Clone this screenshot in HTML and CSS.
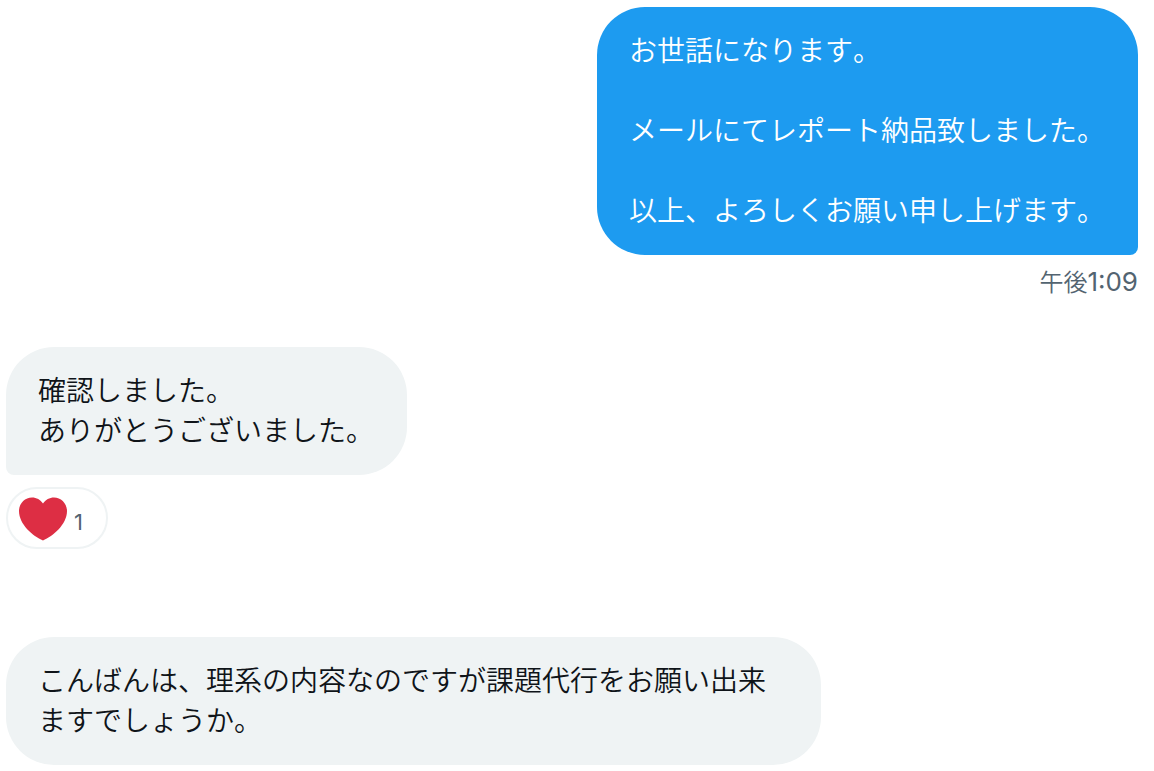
FILE: index.html
```html
<!DOCTYPE html>
<html lang="ja">
<head>
<meta charset="utf-8">
<meta name="viewport" content="width=device-width, initial-scale=1">
<title>メッセージ</title>
<link rel="stylesheet" href="styles.css">
</head>
<body>
<main class="chat">
  <article class="message sent">
    <p class="bubble">お世話になります。<br><br>メールにてレポート納品致しました。<br><br>以上、よろしくお願い申し上げます。</p>
    <time class="time" datetime="13:09">午後<span class="clock">1:09</span></time>
  </article>
  <article class="message received">
    <p class="bubble tail">確認しました。<br>ありがとうございました。</p>
    <button class="reaction" type="button">
      <svg class="heart" viewBox="0 0 48 43" aria-hidden="true"><path d="M24 43C14 38.500 0 27 0 13.500C0 6 6 0 13 0C17.500 0 21.500 2.300 24 6C26.500 2.300 30.500 0 35 0C42 0 48 6 48 13.500C48 27 34 38.500 24 43Z"/></svg>
      <span class="count">1</span>
    </button>
  </article>
  <article class="message received">
    <p class="bubble">こんばんは、理系の内容なのですが課題代行をお願い出来ますでしょうか。</p>
  </article>
</main>
</body>
</html>
```
FILE: styles.css
```css
* { box-sizing: border-box; }
body {
  margin: 0;
  background: #fff;
  color: #0f1419;
  font-family: Inter, "Noto Sans CJK JP", sans-serif;
  font-size: 28px;
  font-weight: 350;
  font-kerning: none;
  line-height: 40px;
}
.chat {
  display: flex;
  flex-direction: column;
  padding: 7px 16px 6px 6px;
}
.message {
  display: flex;
  flex-direction: column;
  align-items: flex-start;
}
.sent { align-items: flex-end; margin-bottom: 48px; }
.received + .received { margin-top: 88px; }
.bubble {
  margin: 0;
  max-width: 815px;
  padding: 24px 33px 24px 32px;
  border-radius: 48px;
  background: #eff3f4;
}
.tail { border-bottom-left-radius: 8px; }
.sent .bubble {
  background: #1d9bf0;
  color: #fff;
  border-bottom-right-radius: 8px;
}
.time {
  margin-top: 12px;
  color: #536471;
  font-size: 24px;
  line-height: 32px;
}
.clock { font-size: 26px; font-weight: 400; line-height: 26px; }
.reaction {
  display: flex;
  align-items: center;
  gap: 7px;
  margin-top: 12px;
  padding: 8px 23px 6px 11px;
  border: 2px solid #eff3f4;
  border-radius: 32px;
  background: #fff;
  color: #536471;
  font: 400 22px/28px Inter, sans-serif;
}
.heart { width: 48px; height: 44px; fill: #dd2e44; }
.count { padding-top: 6px; }
```
